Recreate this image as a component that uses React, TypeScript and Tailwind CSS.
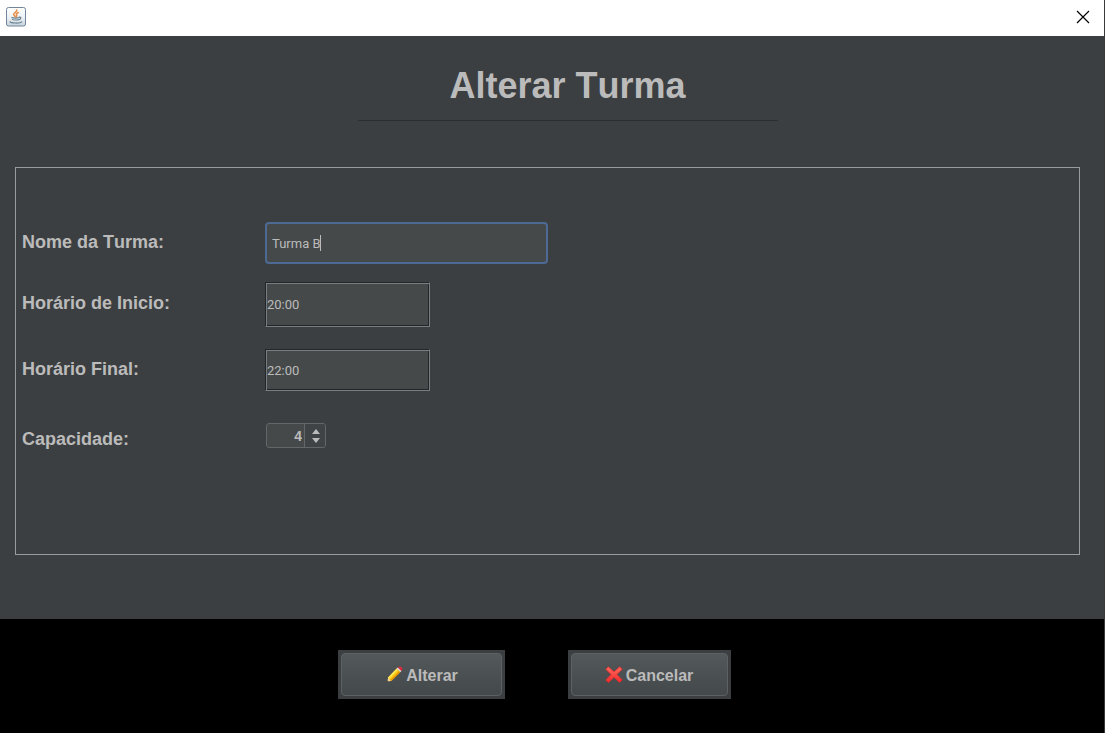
import { useState } from "react";

const labelClass = "text-lg leading-[18px] font-bold";
const timeFieldClass =
  "w-full max-w-[165px] border border-t-[#232628] border-l-[#232628] border-r-[#7b7e80] border-b-[#7b7e80] bg-[#45494a] font-[Roboto,sans-serif] text-[13px] text-[#bbbbbb] outline-none shadow-[inset_1px_1px_0_#7b7e80,inset_-1px_-1px_0_#232628] px-px";

function JavaIcon() {
  return (
    <svg width="20" height="20" viewBox="0 0 20 20" aria-hidden="true">
      <defs>
        <linearGradient id="tile" x1="0" y1="0" x2="0" y2="1">
          <stop offset="0" stopColor="#ffffff" />
          <stop offset="0.55" stopColor="#edf1f4" />
          <stop offset="1" stopColor="#c6d2dc" />
        </linearGradient>
      </defs>
      <rect x="0.5" y="0.5" width="19" height="18.5" rx="2" fill="url(#tile)" stroke="#71869a" />
      <path
        d="M10.800 3c.8 1.700-3.600 2.900-3.100 4.600.2.800 1 1.300 1.500 2M12.300 5.500c-1.500.7-2.400 1.500-1.700 2.600.4.600.2 1-.3 1.500"
        fill="none"
        stroke="#e8904a"
        strokeWidth="1.600"
        strokeLinecap="round"
      />
      <path
        d="M5.800 10.500c1.500.7 6 .7 7.500 0M6.400 12.500c1.400.6 5 .6 6.300 0M13.300 10.200c2.200-.4 2 1.800-.2 2.500M4.200 14.600c-.6 1.700 10 2 11.500.3"
        fill="none"
        stroke="#68808f"
        strokeWidth="1.200"
        strokeLinecap="round"
      />
    </svg>
  );
}

function PencilIcon() {
  return (
    <svg width="17" height="17" viewBox="0 0 17 17" aria-hidden="true">
      <path d="M1 16l1.200-4.300 3.100 3z" fill="#f3d3a0" />
      <path d="M1 16l.5-1.800 1.300 1.200z" fill="#33271c" />
      <path d="M1.800 11.700L10.700 2.500l3.700 3.600-9.100 9z" fill="#fbc814" />
      <path d="M1.800 11.700L10.700 2.500l1.200 1.200L3.100 12.900z" fill="#ffe75a" />
      <path d="M4.300 14.100L13.300 5l1.100 1.100-9.100 9z" fill="#e29205" />
      <path d="M10.700 2.500l1.100-1.100 3.700 3.600-1.100 1.100z" fill="#e6e6e8" />
      <path d="M11.800 1.400c1.200-1.200 2.900-1.100 3.900-.2s1 2.700-.2 3.800z" fill="#d92c3f" />
    </svg>
  );
}

function CrossIcon() {
  return (
    <svg width="18" height="18" viewBox="0 0 18 18" aria-hidden="true">
      <defs>
        <linearGradient id="cross" x1="0" y1="0" x2="0" y2="1">
          <stop offset="0" stopColor="#ff6b5e" />
          <stop offset="1" stopColor="#f02a2c" />
        </linearGradient>
      </defs>
      <path
        d="M3.300.8L9 5.800l5.600-5 2.600 2.500L12 8.500l5.200 5.400-2.600 2.600L9 11.400l-5.600 5.200-2.600-2.600L6 8.500.8 3.300z"
        fill="url(#cross)"
        stroke="#e02a2a"
        strokeWidth="0.800"
        strokeLinejoin="round"
      />
    </svg>
  );
}

export default function App() {
  const [nome, setNome] = useState("Turma B");
  const [inicio, setInicio] = useState("20:00");
  const [fim, setFim] = useState("22:00");
  const [capacidade, setCapacidade] = useState(4);
  const [focused, setFocused] = useState(false);

  return (
    <div className="flex min-h-screen flex-col border-r border-[#3a3a3a] bg-[#3c3f41] font-['Liberation_Sans',sans-serif] text-[#bbbbbb]">
      <header className="flex h-9 items-center justify-between bg-white pr-[14px] pl-[6px]">
        <div className="pb-[2px]">
          <JavaIcon />
        </div>
        <button type="button" aria-label="Fechar" className="pb-[2px] text-black">
          <svg width="14" height="14" viewBox="0 0 14 14" aria-hidden="true">
            <path d="M1 1l12 12M13 1L1 13" stroke="currentColor" strokeWidth="1.200" />
          </svg>
        </button>
      </header>

      <main className="flex-1 pr-6 pb-16 pl-[15px] [font-kerning:none]">
        <div className="flex flex-col items-center pt-7 pl-10">
          <h1 className="text-4xl leading-[44px] font-bold">Alterar Turma</h1>
          <hr className="mt-3 w-full max-w-[420px] border-t border-[#2b2d2f]" />
        </div>

        <form
          id="turma"
          onSubmit={(e) => e.preventDefault()}
          className="mt-[46px] border border-[#999b9c] pt-[54px] pb-[106px] pl-[6px]"
        >
          <div className="grid grid-cols-[243px_1fr] items-center">
            <label htmlFor="nome" className={`pb-[3px] ${labelClass}`}>
              Nome da Turma:
            </label>
            <div className="relative w-full max-w-[283px]">
              <input
                id="nome"
                value={nome}
                onChange={(e) => setNome(e.target.value)}
                onFocus={() => setFocused(true)}
                className="block h-[42px] w-full rounded-[4px] border-2 border-[#4c6a94] bg-[#45494a] px-[5px] font-[Roboto,sans-serif] text-[13px] text-[#bbbbbb] outline-none [font-kerning:normal]"
              />
              {!focused && <span className="absolute top-[13px] left-[55px] h-4 w-px bg-[#bbbbbb]" />}
            </div>
          </div>

          <div className="mt-[18px] grid grid-cols-[243px_1fr] items-center">
            <label htmlFor="inicio" className={`pb-[3px] ${labelClass}`}>
              Horário de Inicio:
            </label>
            <input
              id="inicio"
              value={inicio}
              onChange={(e) => setInicio(e.target.value)}
              className={`h-[45px] ${timeFieldClass}`}
            />
          </div>

          <div className="mt-[22px] grid grid-cols-[243px_1fr] items-center">
            <label htmlFor="fim" className={`pb-[3px] ${labelClass}`}>
              Horário Final:
            </label>
            <input
              id="fim"
              value={fim}
              onChange={(e) => setFim(e.target.value)}
              className={`h-[42px] ${timeFieldClass}`}
            />
          </div>

          <div className="mt-8 grid grid-cols-[243px_1fr] items-end">
            <label htmlFor="capacidade" className={labelClass}>
              Capacidade:
            </label>
            <div className="ml-px flex h-[25px] w-[60px] overflow-hidden rounded-[3px] border border-[#646667] bg-[#45494a]">
              <input
                id="capacidade"
                inputMode="numeric"
                value={capacidade}
                onChange={(e) => setCapacidade(Number(e.target.value) || 0)}
                className="w-0 flex-1 pr-[2px] text-right text-sm font-bold outline-none"
              />
              <div className="flex w-[21px] flex-col items-center justify-center gap-[4px] border-l border-[#646667] bg-[#3f4345] pt-px pl-px">
                <button type="button" aria-label="Aumentar" onClick={() => setCapacidade(capacidade + 1)}>
                  <svg className="block" width="8" height="5" viewBox="0 0 8 5" aria-hidden="true">
                    <path d="M0 5L4 0l4 5z" fill="#bbbbbb" />
                  </svg>
                </button>
                <button
                  type="button"
                  aria-label="Diminuir"
                  onClick={() => setCapacidade(Math.max(0, capacidade - 1))}
                >
                  <svg className="block" width="8" height="5" viewBox="0 0 8 5" aria-hidden="true">
                    <path d="M0 0h8L4 5z" fill="#bbbbbb" />
                  </svg>
                </button>
              </div>
            </div>
          </div>
        </form>
      </main>

      <footer className="flex justify-center gap-[63px] bg-black pt-[31px] pr-9 pb-[34px]">
        <button type="submit" form="turma" className="flex h-[49px] w-[167px] bg-[#3c3f41] p-[3px]">
          <span className="flex h-full w-full items-center justify-center gap-[3px] rounded-[4px] border border-[#5e6162] bg-linear-to-b from-[#53585a] to-[#43484a] pl-[2px] font-bold">
            <PencilIcon />
            <span className="pt-[2px]">Alterar</span>
          </span>
        </button>
        <button type="button" className="flex h-[49px] w-[163px] bg-[#3c3f41] p-[3px]">
          <span className="flex h-full w-full items-center justify-center gap-[3px] rounded-[4px] border border-[#5e6162] bg-linear-to-b from-[#53585a] to-[#43484a] font-bold">
            <CrossIcon />
            <span className="pt-[2px]">Cancelar</span>
          </span>
        </button>
      </footer>
    </div>
  );
}
